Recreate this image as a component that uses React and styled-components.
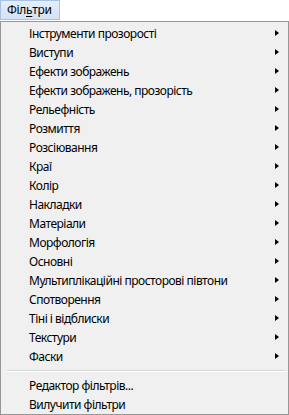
import React from "react";
import styled, { createGlobalStyle } from "styled-components";

const Global = createGlobalStyle`
  html, body { margin: 0; padding: 0; background: #ffffff; }
  body { font-family: "Noto Sans", "Liberation Sans", sans-serif; font-size: 12px; color: #000; }
`;

const Page = styled.div`
  width: 289px;
  height: 415px;
  display: flex;
  flex-direction: column;
  overflow: hidden;
`;

const MenuBar = styled.div`
  height: 21px;
  display: flex;
  align-items: flex-start;
  background: #ffffff;
`;

const BarItem = styled.div`
  height: 20px;
  box-sizing: border-box;
  padding: 0 7px 0 6px;
  display: flex;
  align-items: center;
  border: 1px solid #a8c1e4;
  background: linear-gradient(#e4eefb, #d3e2f6);
  line-height: 1;
  letter-spacing: -0.3px;
  u { text-decoration: underline; text-underline-offset: 2px; }
`;

const Menu = styled.div`
  flex: 1;
  box-sizing: border-box;
  border: 1px solid #979797;
  background: #f0f0f0;
  padding: 2px 2px 0 2px;
  display: flex;
  flex-direction: column;
`;

const Item = styled.div`
  height: 19px;
  display: flex;
  align-items: center;
  padding-left: 26px;
  padding-right: 7px;
  white-space: nowrap;
`;

const Label = styled.span`
  flex: 1;
  line-height: 19px;
  letter-spacing: -0.5px;
`;

const Arrow = styled.span`
  width: 0;
  height: 0;
  border-top: 3.5px solid transparent;
  border-bottom: 3.5px solid transparent;
  border-left: 4px solid #000;
  margin-bottom: 2px;
`;

const Separator = styled.div`
  height: 10px;
  display: flex;
  align-items: center;
  padding-left: 4px;
  &::after {
    content: "";
    flex: 1;
    height: 1px;
    background: #d7d7d7;
    border-bottom: 1px solid #ffffff;
  }
`;

const subItems = [
  "Інструменти прозорості",
  "Виступи",
  "Ефекти зображень",
  "Ефекти зображень, прозорість",
  "Рельефність",
  "Розмиття",
  "Розсіювання",
  "Краї",
  "Колір",
  "Накладки",
  "Матеріали",
  "Морфологія",
  "Основні",
  "Мультиплікаційні просторові півтони",
  "Спотворення",
  "Тіні і відблиски",
  "Текстури",
  "Фаски",
];

const plainItems = ["Редактор фільтрів...", "Вилучити фільтри"];

export default function App() {
  return (
    <Page>
      <Global />
      <MenuBar>
        <BarItem>
          Філ<u>ь</u>три
        </BarItem>
      </MenuBar>
      <Menu>
        {subItems.map((t) => (
          <Item key={t}>
            <Label>{t}</Label>
            <Arrow />
          </Item>
        ))}
        <Separator />
        {plainItems.map((t) => (
          <Item key={t}>
            <Label>{t}</Label>
          </Item>
        ))}
      </Menu>
    </Page>
  );
}
